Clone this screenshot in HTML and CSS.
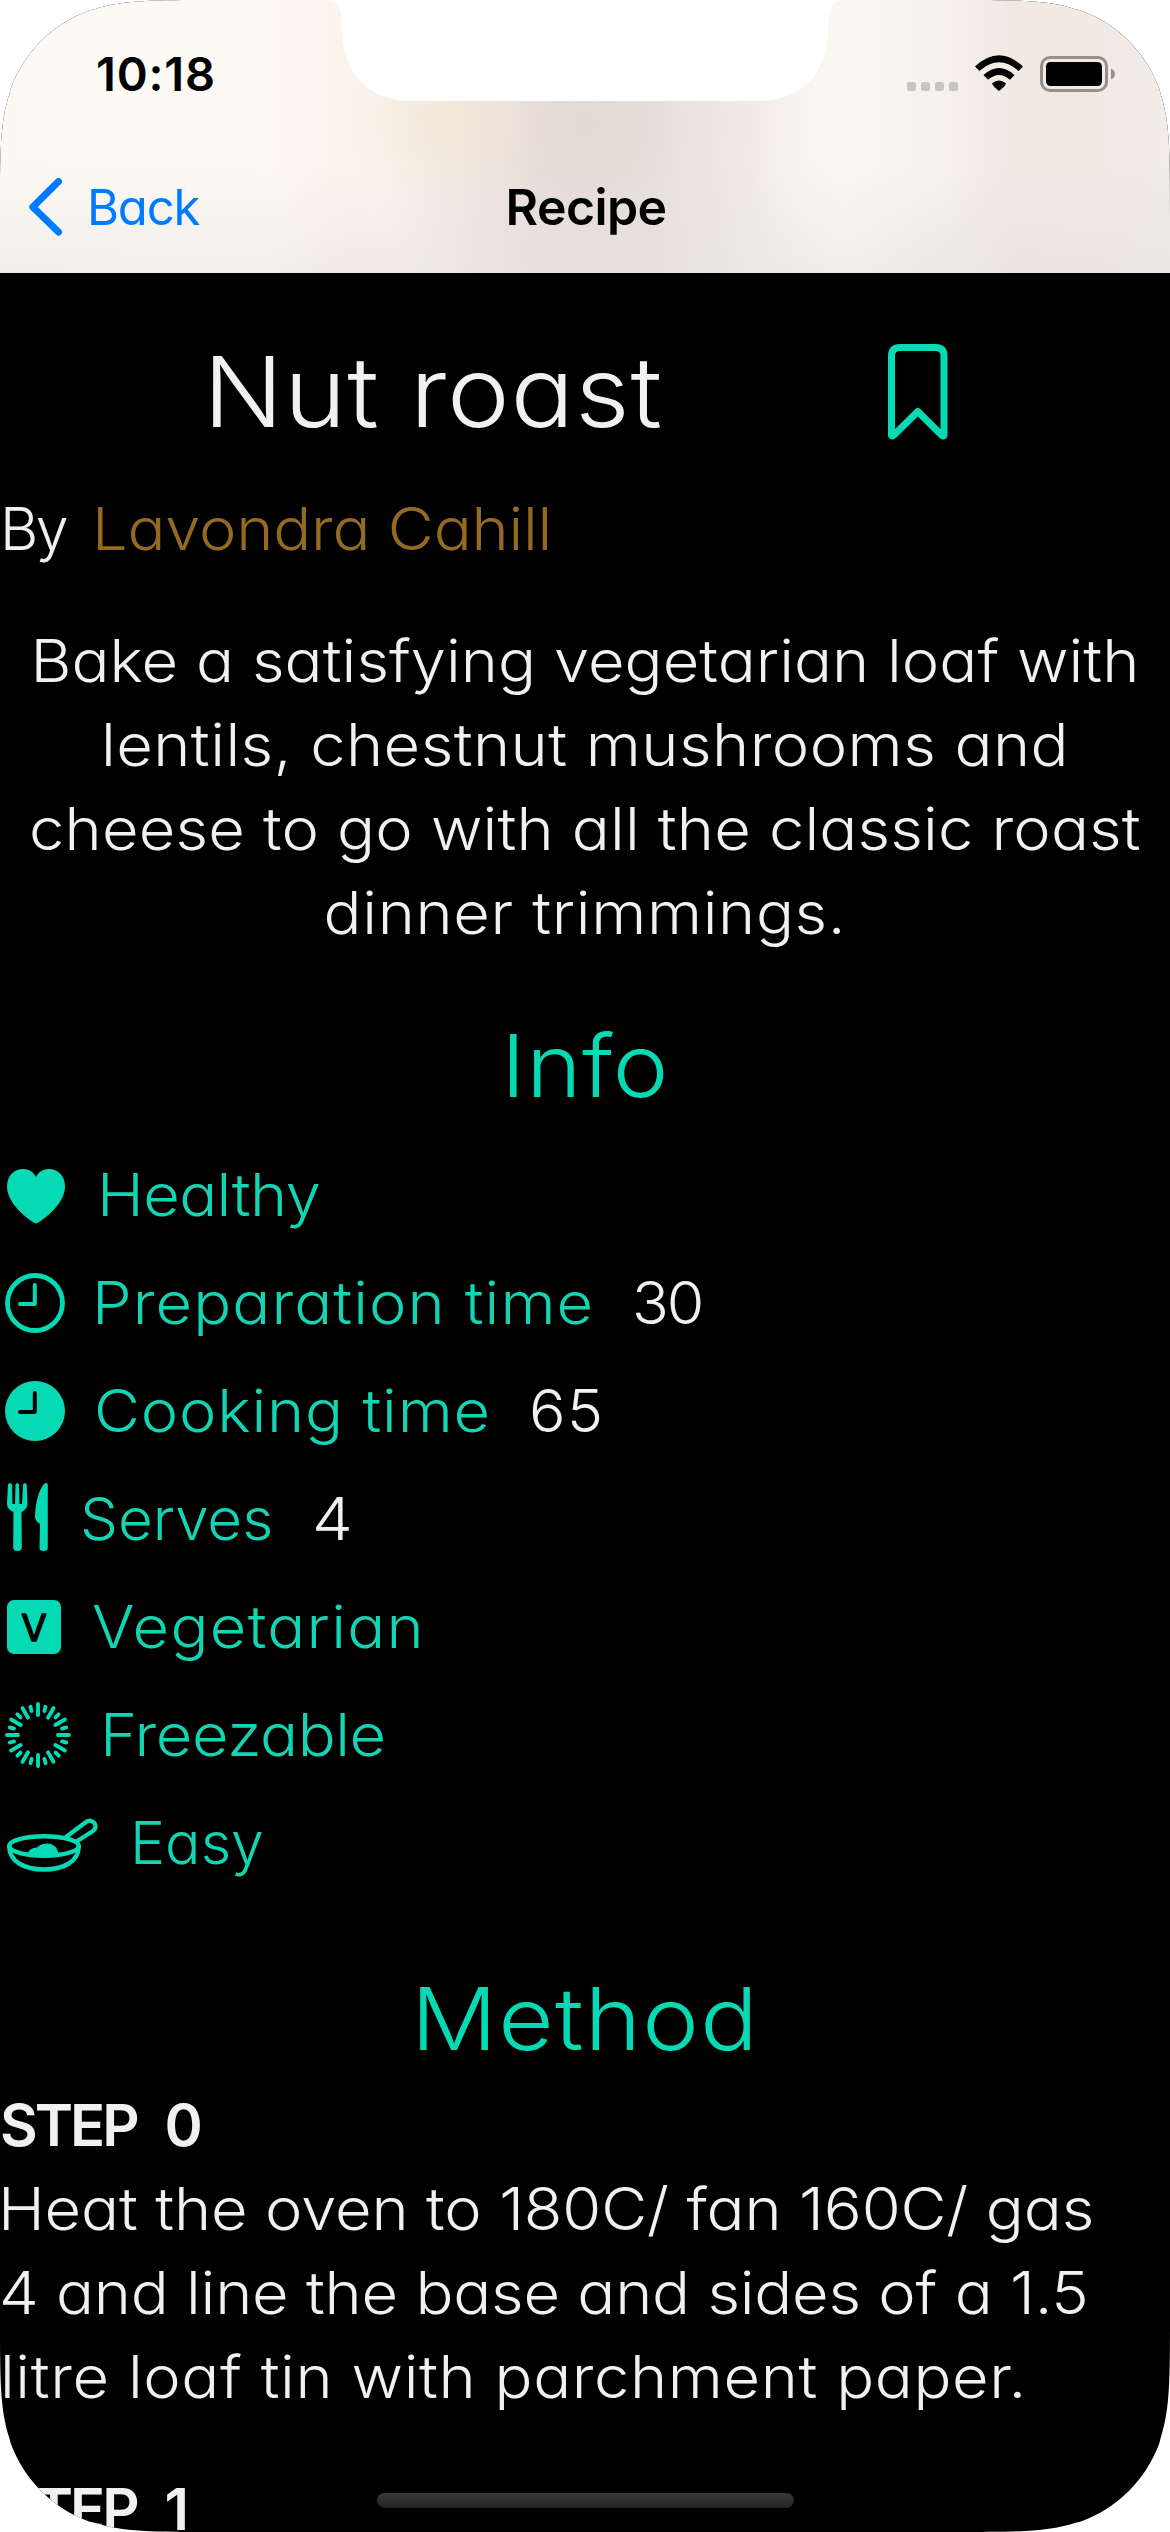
FILE: index.html
```html
<!DOCTYPE html>
<html lang="en">
<head>
<meta charset="utf-8">
<title>Recipe</title>
<link rel="stylesheet" href="styles.css">
</head>
<body>
<div class="screen">
  <header class="header">
    <div class="status">
      <span class="time">10:18</span>
      <svg class="status-icons" width="210" height="40" viewBox="906 54 210 40">
        <g fill="#c8c4bf"><rect x="907" y="82" width="9" height="9" rx="2.5"/><rect x="921" y="82" width="9" height="9" rx="2.5"/><rect x="935" y="82" width="9" height="9" rx="2.5"/><rect x="949" y="82" width="9" height="9" rx="2.5"/></g>
        <path d="M975 66.500Q999 44 1023 66.500L1018.500 71Q999 53.500 979.500 71Z"/>
        <path d="M983.500 75Q999 61 1014.500 75L1010 79.800Q999 70 988 79.800Z"/>
        <path d="M992 83.500Q999 77.500 1006 83.500Q1005 86.500 999 91Q993 86.500 992 83.500Z"/>
        <rect x="1041.500" y="57.500" width="65" height="33" rx="8.500" fill="none" stroke="#96908b" stroke-width="3"/>
        <rect x="1046" y="62" width="56" height="24" rx="4.500"/>
        <path d="M1111 68.500C1113.500 69.500 1115 71.500 1115 74S1113.500 78.500 1111 79.500Z" fill="#96908b"/>
      </svg>
    </div>
    <nav class="nav">
      <a class="back">
        <svg width="35" height="60" viewBox="27 177 35 60"><path d="M57.500 181.500L31.800 207L57.500 232" fill="none" stroke="#007aff" stroke-width="7" stroke-linecap="round" stroke-linejoin="round"/></svg>
        <span>Back</span>
      </a>
      <span class="nav-title">Recipe</span>
    </nav>
  </header>
  <svg class="notch" width="520" height="104" viewBox="325 0 520 104"><path d="M325 0C337 1 341.500 8 341.500 20C341.500 32 342.500 42 345 52C353 84 378 101 412 101H758C792 101 817 84 825 52C827.500 42 828.500 32 828.500 20C828.500 8 833 1 845 0Z" fill="#fff"/></svg>

  <main class="content">
    <div class="title-row">
      <h1 class="title">Nut roast</h1>
      <svg width="60" height="96" viewBox="888 344 60 96"><path d="M891.500 435.500V356Q891.500 347.500 900 347.500H935.500Q944 347.500 944 356V435.500Q943 436.500 941.500 435L917.800 411.500L894 435Q892.500 436.500 891.500 435.500Z" fill="none" stroke="#06dab5" stroke-width="7" stroke-linejoin="round"/></svg>
    </div>
    <p class="author"><span class="by">By</span><span class="name">Lavondra Cahill</span></p>
    <p class="description">
      <span class="line d1">Bake a satisfying vegetarian loaf with</span>
      <span class="line d2">lentils, chestnut mushrooms and</span>
      <span class="line d3">cheese to go with all the classic roast</span>
      <span class="line d4">dinner trimmings.</span>
    </p>

    <h2 class="heading info-heading">Info</h2>
    <ul class="info">
      <li class="healthy"><svg width="97" height="108"><path d="M36 82.500C34 82.500 7 65 7 45.500C7 35 14 28 23 28C29 28 33.500 31 36 36C38.500 31 43 28 49 28C58 28 65 35 65 45.500C65 65 38 82.500 36 82.500Z"/></svg><span class="label">Healthy</span></li>
      <li class="prep"><svg width="92" height="108"><circle cx="35" cy="54" r="27.500" class="ink" stroke-width="4.800"/><path d="M34.800 36V55H20" class="ink" stroke-width="4"/></svg><span class="label">Preparation time</span><span class="value">30</span></li>
      <li class="cook"><svg width="94" height="108"><circle cx="35" cy="54" r="30"/><path d="M34.800 36V55H20" class="ink cut" stroke-width="4"/></svg><span class="label">Cooking time</span><span class="value">65</span></li>
      <li class="serves"><svg width="80" height="108"><path d="M8 19.500Q10 16.500 12 19.500L12.500 39H15L15.500 19.500Q17.300 16.500 19 19.500L19.500 39H22L23 19.500Q25 16.500 26.700 19.500L27.500 38C27.500 43 25 45 21.500 47L21.800 83Q21.500 86 17.300 86Q13.500 86 13.200 83L13.500 47C9.500 45 7 43 7 38Z"/><path d="M47.800 20V83Q47.800 86 43.500 86Q39.500 86 39.500 83L40 59Q34.800 56 35 51C35.500 38 38.500 25 44.500 18.500Q47.800 17 47.800 20Z"/></svg><span class="label">Serves</span><span class="value">4</span></li>
      <li class="veg"><svg width="92" height="108"><rect x="7" y="27" width="54" height="54" rx="7"/><text x="34" y="67.500" class="badge">V</text></svg><span class="label">Vegetarian</span></li>
      <li class="freeze"><svg width="100" height="108">
        <defs><path id="rays" d="M38 23V34M45.500 25.800L44.400 30"/></defs>
        <g class="ink" stroke-width="3.900">
          <use href="#rays"/><use href="#rays" transform="rotate(30 38 54)"/><use href="#rays" transform="rotate(60 38 54)"/><use href="#rays" transform="rotate(90 38 54)"/><use href="#rays" transform="rotate(120 38 54)"/><use href="#rays" transform="rotate(150 38 54)"/><use href="#rays" transform="rotate(180 38 54)"/><use href="#rays" transform="rotate(210 38 54)"/><use href="#rays" transform="rotate(240 38 54)"/><use href="#rays" transform="rotate(270 38 54)"/><use href="#rays" transform="rotate(300 38 54)"/><use href="#rays" transform="rotate(330 38 54)"/>
        </g></svg><span class="label">Freezable</span></li>
      <li class="easy"><svg width="130" height="108"><g class="ink" stroke-width="4.400"><ellipse cx="44" cy="57" rx="34.800" ry="9.800"/><path d="M9.200 57C9.200 73 25 80.500 44 80.500S78.800 73 78.800 57M66 48L86 33C92 28.500 99.500 37 93 42L76.500 52.500"/></g><path d="M27.500 65Q29 59 37 58.500Q41 54.500 48 54.500Q57 55.500 58.500 65Q44 69 27.500 65Z"/></svg><span class="label">Easy</span></li>
    </ul>

    <h2 class="heading method-heading">Method</h2>
    <section class="step">
      <h3 class="step-title"><span>STEP</span><span class="number">0</span></h3>
      <p class="step-text">
        <span class="line m1">Heat the oven to 180C/ fan 160C/ gas</span>
        <span class="line m2">4 and line the base and sides of a 1.5</span>
        <span class="line m3">litre loaf tin with parchment paper.</span>
      </p>
    </section>
    <section class="step">
      <h3 class="step-title"><span>STEP</span><span class="number">1</span></h3>
    </section>
  </main>
  <div class="home-indicator"></div>
</div>
</body>
</html>
```
FILE: styles.css
```css
* { box-sizing: border-box; margin: 0; padding: 0; }
html, body { width: 1170px; height: 2532px; overflow: hidden; background: #fff; }
body { font-family: Inter, "Liberation Sans", sans-serif; font-feature-settings: "cv11"; }
svg { display: block; flex: none; }

.screen {
  position: relative;
  width: 1170px;
  height: 2532px;
  overflow: hidden;
  background: #000;
  clip-path: path("M215.5 0H954.5C1016.500 0 1047.600 0 1075.500 9.200L1081 10.600C1117.400 23.800 1146.200 52.600 1159.400 89L1160.800 94.500C1170 122.400 1170 153.500 1170 215.500V2316.500C1170 2378.500 1170 2409.600 1160.800 2437.500L1159.400 2443C1146.200 2479.400 1117.400 2508.200 1081 2521.400L1075.500 2522.800C1047.600 2532 1016.500 2532 954.500 2532H215.500C153.500 2532 122.400 2532 94.500 2522.800L89 2521.400C52.600 2508.200 23.800 2479.400 10.600 2443L9.200 2437.500C0 2409.600 0 2378.500 0 2316.500V215.500C0 153.500 0 122.400 9.200 94.500L10.600 89C23.800 52.600 52.600 23.800 89 10.600L94.500 9.200C122.400 0 153.500 0 215.500 0Z");
}

.header {
  height: 273px;
  background:
    linear-gradient(180deg, rgba(225, 225, 225, 0) 60%, rgba(222, 222, 222, .38) 100%),
    radial-gradient(ellipse 110px 90px at 450px 120px, rgba(245, 230, 212, .65), rgba(245, 230, 212, 0)),
    radial-gradient(ellipse 220px 240px at 585px 125px, rgba(226, 213, 206, .8), rgba(230, 220, 215, .45) 50%, rgba(240, 232, 228, 0)),
    linear-gradient(90deg, #fcf9f4 0, #fdf9f4 23%, #fcf3ec 29%, #faf3ed 37%, #ece4e0 46%, #ece5e1 56%, #f6f2ed 66%, #fbf8f3 72%, #f6f2ec 80%, #f2e9e3 87%, #f3eae4 94%, #f1ede8 100%);
}
.status { display: flex; align-items: center; justify-content: space-between; height: 148px; padding: 0 54px 0 96px; }
.time { font-size: 47px; font-weight: 600; letter-spacing: .8px; line-height: 60px; }
.nav { display: grid; grid-template-columns: 1fr auto 1fr; align-items: center; height: 118px; padding: 0 26px 0 28px; }
.back { display: flex; align-items: center; gap: 24px; color: #007aff; font-size: 49px; letter-spacing: -1.2px; }
.nav-title { font-size: 50px; font-weight: 600; letter-spacing: -.6px; }
.notch { position: absolute; top: 0; left: 325px; }

.content { padding-top: 60px; color: #f2f1f1; font-size: 59px; font-weight: 300; line-height: 84px; }
.title-row { display: flex; align-items: center; height: 117px; padding-left: 203px; gap: 224px; }
.title { width: 461px; font-size: 98px; font-weight: 300; line-height: 117px; letter-spacing: .7px; white-space: nowrap; transform: scaleX(1.08); transform-origin: left; }
.author { display: flex; margin-top: 37px; }
.by { width: 92px; letter-spacing: -2.500px; }
.name { color: #946a23; letter-spacing: -.170px; transform: scaleX(1.07); transform-origin: left; }
.description { margin-top: 48px; text-align: center; }
.line { display: block; white-space: nowrap; transform: scaleX(1.07); }
.d1 { letter-spacing: .060px; }
.d2 { letter-spacing: .440px; }
.d3 { letter-spacing: .180px; }
.d4 { letter-spacing: .620px; }

.heading { color: #06dab5; font-size: 87px; font-weight: 300; line-height: 122px; text-align: center; }
.info-heading { margin-top: 50px; letter-spacing: .570px; transform: scaleX(1.08); }
.method-heading { margin-top: 61px; letter-spacing: 1.100px; transform: scaleX(1.1); }
.info { margin-top: 14px; list-style: none; }
.info li { display: flex; align-items: center; height: 108px; }
.info svg { fill: #06dab5; }
.info .ink { fill: none; stroke: #06dab5; stroke-linecap: round; stroke-linejoin: round; }
.info .cut { stroke: #000; }
.badge { fill: #000; stroke: #000; stroke-width: 1.500px; stroke-linejoin: round; font-size: 37px; font-weight: 400; text-anchor: middle; }
.label { color: #14d5b3; transform: scaleX(1.07); transform-origin: left; }
.value { transform: scaleX(1.03); transform-origin: left; }
.healthy .label { letter-spacing: -.550px; }
.prep .label { letter-spacing: 1.030px; }
.prep .value { margin-left: 71px; letter-spacing: -2px; }
.cook .label { letter-spacing: .770px; }
.cook .value { margin-left: 64px; letter-spacing: 1.400px; }
.serves .label { letter-spacing: -.1px; transform: scaleX(1.02); }
.serves .value { margin-left: 43px; transform: scaleX(1.1); }
.veg .label { letter-spacing: 1.200px; }
.freeze .label { letter-spacing: -.390px; }
.easy .label { transform: none; }

.step { margin-top: 3px; }
.step + .step { margin-top: 48px; }
.step-title { display: flex; font-size: 58px; font-weight: 600; line-height: 84px; letter-spacing: -3px; }
.step-title .number { margin-left: 28px; }
.step-text .line { transform-origin: left; }
.m1 { letter-spacing: -.120px; margin-left: -2px; }
.m2 { letter-spacing: -.200px; margin-left: -1px; }
.m3 { letter-spacing: .570px; }

.home-indicator { position: absolute; left: 377px; bottom: 24px; width: 417px; height: 15px; border-radius: 8px; background: linear-gradient(#393939, #232323); }
```
